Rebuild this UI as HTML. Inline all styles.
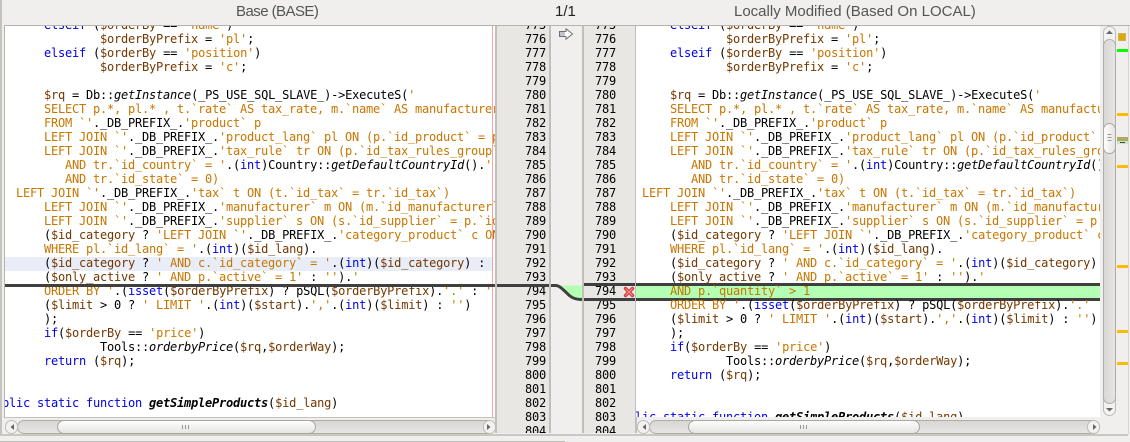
<!DOCTYPE html>
<html><head><meta charset="utf-8"><style>
html,body{margin:0;padding:0;background:#f0efed}
body{width:1130px;height:442px;position:relative;overflow:hidden}
div{position:absolute;box-sizing:border-box}
.t{font-family:"Liberation Sans",sans-serif;font-size:15px;color:#555553;top:3px;line-height:18px;white-space:pre}
.pane{background:#fff;overflow:hidden;top:26px}
.code,.nums{font-family:"DejaVu Sans Mono","Liberation Mono",monospace;font-size:12px;letter-spacing:-.2246px;line-height:14px;white-space:pre;color:#000}
.code{position:absolute;top:-8px}
.code i{font-style:italic}
.k{color:#0000e6}.s{color:#c87600}.v{color:#733800}
.b{font-weight:bold;font-style:italic}
.gut{background:#e8e7e3;top:26px;height:407px;overflow:hidden;border-left:2px solid #c0bfb9;border-right:2px solid #c0bfb9}
.nums{position:absolute;top:-8px;text-align:right}
.dk{background:#3f3f3f;height:3px}
.tr{background:linear-gradient(#d8d7d4,#e6e5e3);border:1px solid #aeada7;border-radius:7px}
.th{background:linear-gradient(#fdfdfc,#e6e5e2);border:1px solid #a8a7a1;border-radius:7px}
.stp{background:#f3f2f0;border:1px solid #bdbcb6}
.m{background:#ffbb00;left:1117px;width:11px;height:3px}
</style></head><body>
<div class="t" style="left:236px;letter-spacing:-.55px">Base (BASE)</div>
<div class="t" style="left:555px;color:#222">1/1</div>
<div class="t" style="left:734px">Locally Modified (Based On LOCAL)</div>
<div style="left:0;top:0;width:2px;height:435px;background:#c4c3bd"></div>
<div style="left:4px;top:25px;width:1126px;height:1px;background:#b4b3ad"></div>

<!-- left pane -->
<div class="pane" style="left:4px;width:491px;height:392px;border-left:1px solid #b4b3ad;border-bottom:1px solid #c4c3bd">
<div style="left:0;top:231px;width:488px;height:14px;background:#e8edf7"></div>
<div style="left:0;top:0;width:490px;height:392px;overflow:hidden">
<div class="code" style="left:-3px">      <span class="k">elseif</span> (<span class="v">$orderBy</span> == <span class="s">'name'</span>)
              <span class="v">$orderByPrefix</span> = <span class="s">'pl'</span>;
      <span class="k">elseif</span> (<span class="v">$orderBy</span> == <span class="s">'position'</span>)
              <span class="v">$orderByPrefix</span> = <span class="s">'c'</span>;

      <span class="v">$rq</span> = Db::<i>getInstance</i>(_PS_USE_SQL_SLAVE_)-&gt;ExecuteS(<span class="s">'</span>
      <span class="s">SELECT p.*, pl.* , t.`rate` AS tax_rate, m.`name` AS manufacturer_name</span>
      <span class="s">FROM `'</span>._DB_PREFIX_.<span class="s">'product` p</span>
      <span class="s">LEFT JOIN `'</span>._DB_PREFIX_.<span class="s">'product_lang` pl ON (p.`id_product` = pl.`id_product`</span>
      <span class="s">LEFT JOIN `'</span>._DB_PREFIX_.<span class="s">'tax_rule` tr ON (p.`id_tax_rules_group` = tr.`id_tax</span>
         <span class="s">AND tr.`id_country` = '</span>.(<span class="k">int</span>)Country::<i>getDefaultCountryId</i>().<span class="s">'</span>
         <span class="s">AND tr.`id_state` = 0)</span>
  <span class="s">LEFT JOIN `'</span>._DB_PREFIX_.<span class="s">'tax` t ON (t.`id_tax` = tr.`id_tax`)</span>
      <span class="s">LEFT JOIN `'</span>._DB_PREFIX_.<span class="s">'manufacturer` m ON (m.`id_manufacturer` = p.`id</span>
      <span class="s">LEFT JOIN `'</span>._DB_PREFIX_.<span class="s">'supplier` s ON (s.`id_supplier` = p.`id_supplier`)</span>
      (<span class="v">$id_category</span> ? <span class="s">'LEFT JOIN `'</span>._DB_PREFIX_.<span class="s">'category_product` c ON (c.`id</span>
      <span class="s">WHERE pl.`id_lang` = '</span>.(<span class="k">int</span>)(<span class="v">$id_lang</span>).
      (<span class="v">$id_category</span> ? <span class="s">' AND c.`id_category` = '</span>.(<span class="k">int</span>)(<span class="v">$id_category</span>) : <span class="s">''</span>).
      (<span class="v">$only_active</span> ? <span class="s">' AND p.`active` = 1'</span> : <span class="s">''</span>).<span class="s">'</span>
      <span class="s">ORDER BY '</span>.(<span class="k">isset</span>(<span class="v">$orderByPrefix</span>) ? pSQL(<span class="v">$orderByPrefix</span>).<span class="s">'.'</span> : <span class="s">''</span>).<span class="s">'</span>
      (<span class="v">$limit</span> &gt; 0 ? <span class="s">' LIMIT '</span>.(<span class="k">int</span>)(<span class="v">$start</span>).<span class="s">','</span>.(<span class="k">int</span>)(<span class="v">$limit</span>) : <span class="s">''</span>)
      );
      <span class="k">if</span>(<span class="v">$orderBy</span> == <span class="s">'price'</span>)
              Tools::<i>orderbyPrice</i>(<span class="v">$rq</span>,<span class="v">$orderWay</span>);
      <span class="k">return</span> (<span class="v">$rq</span>);</div>
<div class="code" style="left:-17px;top:370px"><span class="k">public static function</span> <span class="b">getSimpleProducts</span>(<span class="v">$id_lang</span>)</div>
</div>
<div style="left:487px;top:0;width:1px;height:392px;background:#ffa0a0"></div>
</div>
<div class="dk" style="left:5px;top:284px;width:490px"></div>

<!-- left gutter -->
<div class="gut" style="left:495px;width:56px"><div class="nums" style="left:0;width:49px">775
776
777
778
779
780
781
782
783
784
785
786
787
788
789
790
791
792
793
794
795
796
797
798
799
800
801
802
803
804</div></div>
<div class="dk" style="left:497px;top:284px;width:52px"></div>

<!-- middle -->
<svg style="position:absolute;left:551px;top:283px" width="31" height="19" viewBox="0 0 31 19">
<path d="M0 2.500H5C10 3 14 9 19 13C22 15.500 26 16.500 31 16.500V2.500Z" fill="#b3ffb3"/>
<path d="M0 2.500H5C10 3 14 9 19 13C22 15.500 26 16.500 31 16.500" fill="none" stroke="#3f3f3f" stroke-width="3"/>
</svg>
<svg style="position:absolute;left:558px;top:28px" width="16" height="12" viewBox="0 0 16 12">
<path d="M1.500 3.500H8V.8L14.500 6 8 11.200V8.500H1.500Z" fill="#fff" stroke="#6f6f78" stroke-width="1"/>
<path d="M2 5H7M2 7H7" stroke="#8a8a92" stroke-width="1"/>
</svg>

<!-- right gutter -->
<div class="gut" style="left:582px;width:55px"><div class="nums" style="left:0;width:32px">775
776
777
778
779
780
781
782
783
784
785
786
787
788
789
790
791
792
793
794
795
796
797
798
799
800
801
802
803
804</div></div>
<div class="dk" style="left:584px;top:283px;width:51px"></div>
<div class="dk" style="left:584px;top:298px;width:51px"></div>
<svg style="position:absolute;left:623px;top:286px" width="12" height="12" viewBox="0 0 12 12">
<path d="M2.500 2.500L9.500 9.500M9.500 2.500L2.500 9.500" stroke="#d93a3a" stroke-width="3.400" stroke-linecap="round"/>
<path d="M2.500 2.500L9.500 9.500M9.500 2.500L2.500 9.500" stroke="#f79a9a" stroke-width="1"/>
</svg>

<!-- right pane -->
<div class="pane" style="left:636px;width:464px;height:391px">
<div style="left:0;top:257px;width:464px;height:18px;background:#3f3f3f"></div>
<div style="left:0;top:260px;width:464px;height:12px;background:#b3ffb3"></div>
<div class="code" style="left:-8px">      <span class="k">elseif</span> (<span class="v">$orderBy</span> == <span class="s">'name'</span>)
              <span class="v">$orderByPrefix</span> = <span class="s">'pl'</span>;
      <span class="k">elseif</span> (<span class="v">$orderBy</span> == <span class="s">'position'</span>)
              <span class="v">$orderByPrefix</span> = <span class="s">'c'</span>;

      <span class="v">$rq</span> = Db::<i>getInstance</i>(_PS_USE_SQL_SLAVE_)-&gt;ExecuteS(<span class="s">'</span>
      <span class="s">SELECT p.*, pl.* , t.`rate` AS tax_rate, m.`name` AS manufacturer_name</span>
      <span class="s">FROM `'</span>._DB_PREFIX_.<span class="s">'product` p</span>
      <span class="s">LEFT JOIN `'</span>._DB_PREFIX_.<span class="s">'product_lang` pl ON (p.`id_product` = pl.`id_product`</span>
      <span class="s">LEFT JOIN `'</span>._DB_PREFIX_.<span class="s">'tax_rule` tr ON (p.`id_tax_rules_group` = tr.`id_tax</span>
         <span class="s">AND tr.`id_country` = '</span>.(<span class="k">int</span>)Country::<i>getDefaultCountryId</i>().<span class="s">'</span>
         <span class="s">AND tr.`id_state` = 0)</span>
  <span class="s">LEFT JOIN `'</span>._DB_PREFIX_.<span class="s">'tax` t ON (t.`id_tax` = tr.`id_tax`)</span>
      <span class="s">LEFT JOIN `'</span>._DB_PREFIX_.<span class="s">'manufacturer` m ON (m.`id_manufacturer` = p.`id</span>
      <span class="s">LEFT JOIN `'</span>._DB_PREFIX_.<span class="s">'supplier` s ON (s.`id_supplier` = p.`id_supplier`)</span>
      (<span class="v">$id_category</span> ? <span class="s">'LEFT JOIN `'</span>._DB_PREFIX_.<span class="s">'category_product` c ON (c.`id</span>
      <span class="s">WHERE pl.`id_lang` = '</span>.(<span class="k">int</span>)(<span class="v">$id_lang</span>).
      (<span class="v">$id_category</span> ? <span class="s">' AND c.`id_category` = '</span>.(<span class="k">int</span>)(<span class="v">$id_category</span>) : <span class="s">''</span>).
      (<span class="v">$only_active</span> ? <span class="s">' AND p.`active` = 1'</span> : <span class="s">''</span>).<span class="s">'</span>
      <span class="s">AND p.`quantity` &gt; 1</span>
      <span class="s">ORDER BY '</span>.(<span class="k">isset</span>(<span class="v">$orderByPrefix</span>) ? pSQL(<span class="v">$orderByPrefix</span>).<span class="s">'.'</span> : <span class="s">''</span>).<span class="s">'</span>
      (<span class="v">$limit</span> &gt; 0 ? <span class="s">' LIMIT '</span>.(<span class="k">int</span>)(<span class="v">$start</span>).<span class="s">','</span>.(<span class="k">int</span>)(<span class="v">$limit</span>) : <span class="s">''</span>)
      );
      <span class="k">if</span>(<span class="v">$orderBy</span> == <span class="s">'price'</span>)
              Tools::<i>orderbyPrice</i>(<span class="v">$rq</span>,<span class="v">$orderWay</span>);
      <span class="k">return</span> (<span class="v">$rq</span>);</div>
<div class="code" style="left:-22px;top:384px"><span class="k">public static function</span> <span class="b">getSimpleProducts</span>(<span class="v">$id_lang</span>)</div>
</div>
<div style="left:582px;top:26px;width:55px;height:0"></div>

<!-- left h scrollbar -->
<div class="tr" style="left:17px;top:420px;width:478px;height:14px"></div>
<div class="stp" style="left:5px;top:420px;width:13px;height:14px;border-radius:7px"></div>
<div class="stp" style="left:483px;top:420px;width:13px;height:14px;border-radius:7px"></div>
<div class="th" style="left:57px;top:420px;width:259px;height:14px"></div>
<svg style="position:absolute;left:5px;top:420px" width="491" height="14">
<path d="M9 4V10L5.500 7Z" fill="#666"/><path d="M482 4V10L485.500 7Z" fill="#666"/>
<path d="M177.500 5V9M180.500 5V9M183.500 5V9" stroke="#9a9a96"/></svg>

<!-- right h scrollbar -->
<div class="tr" style="left:649px;top:420px;width:451px;height:14px"></div>
<div class="stp" style="left:637px;top:420px;width:13px;height:14px;border-radius:7px"></div>
<div class="stp" style="left:1087px;top:420px;width:13px;height:14px;border-radius:7px"></div>
<div class="th" style="left:688px;top:420px;width:232px;height:14px"></div>
<svg style="position:absolute;left:637px;top:420px" width="463" height="14">
<path d="M9 4V10L5.500 7Z" fill="#666"/><path d="M456 4V10L459.500 7Z" fill="#666"/>
<path d="M163.500 5V9M166.500 5V9M169.500 5V9" stroke="#9a9a96"/></svg>

<!-- v scrollbar -->
<div class="stp" style="left:1103px;top:26px;width:13px;height:390px;border-radius:7px;background:#f3f2f0"></div>
<div style="left:1103px;top:39px;width:13px;height:365px;border:1px solid #aeada7;border-radius:7px;background:linear-gradient(90deg,#d8d7d4,#e6e5e3)"></div>
<div style="left:1103px;top:123px;width:13px;height:31px;border:1px solid #a8a7a1;border-radius:7px;background:linear-gradient(90deg,#fdfdfc,#e6e5e2)"></div>
<svg style="position:absolute;left:1103px;top:26px" width="13" height="390">
<path d="M3 8H10L6.500 4.500Z" fill="#666"/><path d="M3 382H10L6.500 385.500Z" fill="#666"/>
<path d="M4.500 108.500H8.500M4.500 111.500H8.500M4.500 114.500H8.500" stroke="#9a9a96"/></svg>

<!-- markers -->
<div style="left:1118px;top:33px;width:8px;height:8px;background:#e0a800;border:1px solid #c9b464"></div>
<div class="m" style="top:49px;background:#00ff00"></div>
<div class="m" style="top:113px"></div>
<div class="m" style="top:137px;height:4px;background:#b0a860"></div>
<div class="m" style="top:141px;height:3px;background:#c5e8c0"></div>
<div style="left:1120px;top:142px;width:5px;height:1px;background:#444"></div>
<div class="m" style="top:165px"></div>
<div class="m" style="top:265px"></div>
<div class="m" style="top:330px"></div>
<div class="m" style="top:362px"></div>

<!-- bottom -->
<div style="left:0;top:434px;width:1128px;height:2px;background:#c8c7c2"></div>
<div style="left:0;top:441px;width:565px;height:1px;background:#bdbcb6"></div>
<div style="left:1128px;top:26px;width:1px;height:408px;background:#d8d7d3"></div>
</body></html>
